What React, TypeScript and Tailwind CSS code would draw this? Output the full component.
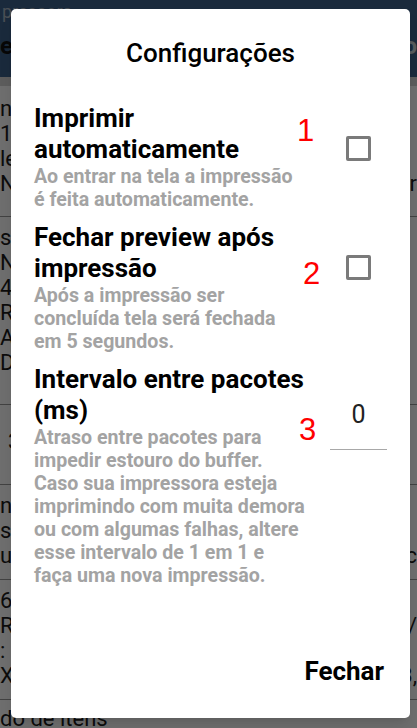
import { ReactNode } from "react";

type Line = { left: string; right?: string };

function BgRow({ lines, className, last }: { lines: Line[]; className: string; last?: boolean }) {
  return (
    <div className={`${className} ${last ? "" : "border-b border-[#9a9a9a]"} flex flex-col`}>
      {lines.map((l, i) => (
        <div key={i} className="flex h-[25px] items-center justify-between text-[22px] leading-[25px] text-[#1c1c1c]">
          <span className="whitespace-nowrap">{l.left}</span>
          <span className="whitespace-nowrap">{l.right ?? ""}</span>
        </div>
      ))}
    </div>
  );
}

function Checkbox() {
  return <div className="h-[25px] w-[25px] rounded-[2px] border-[3px] border-[#7a7a7a] bg-white" />;
}

function Mark({ children, className }: { children: ReactNode; className: string }) {
  // red annotation digits drawn over the dialog
  return (
    <span className={`absolute font-['Liberation_Sans',sans-serif] text-[31px] leading-none text-[#ff0000] ${className}`}>
      {children}
    </span>
  );
}

export default function App() {
  return (
    <div className="relative h-[728px] w-[417px] overflow-hidden bg-white font-['Roboto',sans-serif]">
      {/* Screen behind the dialog */}
      <div className="h-[77px] bg-[#3e638c] pt-[2px]">
        <div className="whitespace-nowrap pl-[2px] text-[18px] leading-[20px] text-[#a9b6c3]">pressora</div>
        <div className="mt-[10px] flex justify-between text-[24px] font-bold leading-[28px]">
          <span className="text-[#111]">ecf</span>
          <span className="text-[#c9d2da]">ção</span>
        </div>
      </div>
      <div className="h-[9px] bg-[#d6d6d6]" />
      <BgRow
        className="h-[131px] pt-[10px]"
        lines={[{ left: "nidade" }, { left: "11" }, { left: "le" }, { left: "NF", right: "er" }]}
      />
      <BgRow
        className="h-[188px] pt-[8px]"
        lines={[{ left: "s" }, { left: "NF" }, { left: "4" }, { left: "R" }, { left: "A" }, { left: "DA" }]}
      />
      <BgRow className="h-[80px] pt-[24px] pl-[8px]" lines={[{ left: "3" }]} />
      <BgRow
        className="h-[95px] pt-[8px]"
        lines={[{ left: "n" }, { left: "s" }, { left: "ua", right: "c" }]}
      />
      <BgRow
        className="h-[120px] pt-[8px]"
        lines={[{ left: "6" }, { left: "RE", right: "/" }, { left: ":" }, { left: "X", right: "3," }]}
      />
      <BgRow className="pt-[6px]" last lines={[{ left: "do de itens" }]} />

      {/* scrim */}
      <div className="absolute inset-0 bg-black/[0.57]" />

      {/* Dialog */}
      <div className="absolute left-[11px] top-[9px] flex h-[709px] w-[399px] flex-col rounded-[5px] bg-white pt-[28px] shadow-lg">
        <h1 className="text-center text-[26px] font-medium leading-[32px] text-black">Configurações</h1>

        <div className="mt-[34px] flex flex-col gap-[11px]">
          {/* Item 1 */}
          <div className="relative flex justify-between pl-[23px]">
            <div className="w-[262px]">
              <div className="whitespace-nowrap text-[26px] font-bold leading-[31px] text-black">
                Imprimir
                <br />
                automaticamente
              </div>
              <div className="whitespace-nowrap text-[19.6px] font-bold leading-[23px] text-[#a3a3a3]">
                Ao entrar na tela a impressão
                <br />é feita automaticamente.
              </div>
            </div>
            <div className="mr-[39px] mt-[33px]">
              <Checkbox />
            </div>
            <Mark className="left-[286px] top-[12px]">1</Mark>
          </div>

          {/* Item 2 */}
          <div className="relative flex justify-between pl-[23px]">
            <div className="w-[262px]">
              <div className="whitespace-nowrap text-[26px] font-bold leading-[31px] text-black">
                Fechar preview após
                <br />
                impressão
              </div>
              <div className="whitespace-nowrap text-[19.6px] font-bold leading-[23px] text-[#a3a3a3]">
                Após a impressão ser
                <br />
                concluída tela será fechada
                <br />
                em 5 segundos.
              </div>
            </div>
            <div className="mr-[39px] mt-[33px]">
              <Checkbox />
            </div>
            <Mark className="left-[292px] top-[36px]">2</Mark>
          </div>

          {/* Item 3 */}
          <div className="relative flex justify-between pl-[23px]">
            <div className="w-[280px]">
              <div className="whitespace-nowrap text-[26px] font-bold leading-[31px] text-black">
                Intervalo entre pacotes
                <br />
                (ms)
              </div>
              <div className="whitespace-nowrap text-[19.6px] font-bold leading-[23px] text-[#a3a3a3]">
                Atraso entre pacotes para
                <br />
                impedir estouro do buffer.
                <br />
                Caso sua impressora esteja
                <br />
                imprimindo com muita demora
                <br />
                ou com algumas falhas, altere
                <br />
                esse intervalo de 1 em 1 e
                <br />
                faça uma nova impressão.
              </div>
            </div>
            <div className="mr-[23px] mt-[36px] h-[50px] w-[57px] border-b border-[#a8a8a8] text-center text-[25px] leading-[30px] text-[#222]">
              0
            </div>
            <Mark className="left-[288px] top-[50px]">3</Mark>
          </div>
        </div>

        <div className="mt-auto flex justify-end pb-[32px] pr-[26px]">
          <button className="text-[26px] font-bold leading-[30px] text-black">Fechar</button>
        </div>
      </div>
    </div>
  );
}
